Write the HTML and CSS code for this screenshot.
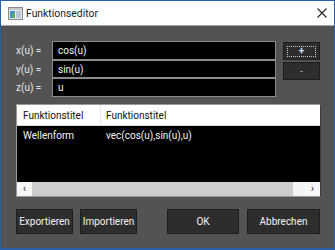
FILE: index.html
```html
<!DOCTYPE html>
<html>
<head>
<meta charset="utf-8">
<link rel="stylesheet" href="styles.css">
</head>
<body>
<div class="window">
  <div class="titlebar">
    <svg class="appicon" width="15" height="13" viewBox="0 0 15 13">
      <rect x="0.5" y="0.5" width="14" height="12" fill="#e8e8e8" stroke="#8a8a8a"/>
      <rect x="1" y="1" width="13" height="2" fill="#c8c8c8"/>
      <rect x="2" y="4" width="5" height="7" fill="#3f8fd8"/>
      <rect x="4" y="6" width="3" height="5" fill="#5aa85a"/>
      <rect x="8" y="4" width="5" height="7" fill="#b8c8d8"/>
    </svg>
    <span class="title">Funktionseditor</span>
    <svg class="close" width="10" height="10" viewBox="0 0 10 10">
      <path d="M0.5 0.5 L9.5 9.5 M9.5 0.5 L0.5 9.5" stroke="#222" stroke-width="1.1"/>
    </svg>
  </div>
  <div class="content">
    <div class="formulas">
      <div class="labels">
        <div class="lbl r1">x(u) =</div>
        <div class="lbl r2">y(u) =</div>
        <div class="lbl r3">z(u) =</div>
      </div>
      <div class="inputs">
        <div class="field r1">cos(u)</div>
        <div class="field r2">sin(u)</div>
        <div class="field r3">u</div>
      </div>
      <div class="pm">
        <div class="btn small focus"><span class="ring">+</span></div>
        <div class="btn small"><span class="minus">-</span></div>
      </div>
    </div>
    <div class="table">
      <div class="thead">
        <div class="c1">Funktionstitel</div>
        <div class="c2">Funktionstitel</div>
      </div>
      <div class="tbody">
        <div class="row">
          <div class="c1">Wellenform</div>
          <div class="c2">vec(cos(u),sin(u),u)</div>
        </div>
      </div>
      <div class="hscroll">
        <div class="arrow">&#8249;</div>
        <div class="thumb"></div>
        <div class="track"></div>
        <div class="arrow">&#8250;</div>
      </div>
    </div>
    <div class="actions">
      <div class="btn act exp">Exportieren</div>
      <div class="btn act imp">Importieren</div>
      <div class="spacer"></div>
      <div class="btn act ok">OK</div>
      <div class="btn act cancel">Abbrechen</div>
    </div>
  </div>
</div>
</body>
</html>
```
FILE: styles.css
```css
html, body {
  margin: 0;
  padding: 0;
}
body {
  width: 335px;
  height: 250px;
  overflow: hidden;
  font-family: Roboto, "Noto Sans", sans-serif;
  font-size: 10px;
}
.window {
  box-sizing: border-box;
  width: 335px;
  height: 250px;
  border: 1px solid #2b5fa8;
  border-bottom-width: 2px;
  background: #535353;
  display: flex;
  flex-direction: column;
}
.titlebar {
  height: 24px;
  background: #ffffff;
  border-bottom: 1px solid #a8a8a8;
  display: flex;
  align-items: center;
  padding-left: 7px;
  color: #1a1a1a;
}
.appicon {
  margin-right: 3px;
  margin-top: 1px;
}
.title {
  font-size: 10.4px;
  flex: 1;
}
.close {
  margin-right: 7px;
}
.content {
  flex: 1;
  padding: 15px 14px 0 15px;
  color: #f4f4f4;
  display: flex;
  flex-direction: column;
}
.formulas {
  display: flex;
}
.labels {
  width: 36px;
  display: flex;
  flex-direction: column;
}
.lbl {
  display: flex;
  align-items: center;
  height: 19px;
  color: #e8e8e8;
}
.r2 { height: 18px; }
.inputs {
  width: 224px;
  display: flex;
  flex-direction: column;
}
.field {
  box-sizing: border-box;
  height: 19px;
  background: #000;
  border: 1px solid #8c8c8c;
  padding-left: 5px;
  display: flex;
  align-items: center;
}
.field.r2 { height: 18px; }
.pm {
  margin-left: 7px;
  width: 37px;
  display: flex;
  flex-direction: column;
  gap: 2px;
  padding-top: 1px;
}
.btn {
  box-sizing: border-box;
  background: #2d2d2d;
  border: 1px solid #1c1c1c;
  color: #f4f4f4;
  display: flex;
  align-items: center;
  justify-content: center;
}
.btn.small {
  height: 18px;
}
.ring {
  box-sizing: border-box;
  width: 29px;
  height: 11px;
  border: 1px dotted #c8c8c8;
  display: flex;
  align-items: center;
  justify-content: center;
  color: #cfe4ff;
  font-size: 10px;
  font-weight: bold;
  line-height: 1;
}
.minus {
  font-size: 9px;
  line-height: 1;
  color: #d0d0d0;
}
.table {
  margin-top: 7px;
  width: 305px;
  box-sizing: border-box;
  border: 1px solid #9a9a9a;
  border-right-color: #3a3a3a;
  display: flex;
  flex-direction: column;
}
.thead {
  height: 20px;
  background: #ffffff;
  color: #111;
  display: flex;
  align-items: center;
  border-bottom: 1px solid #d8d8d8;
}
.c1 {
  box-sizing: border-box;
  width: 84px;
  padding-left: 6px;
}
.thead .c1 {
  border-right: 1px solid #e5e5e5;
  height: 20px;
  display: flex;
  align-items: center;
}
.c2 {
  padding-left: 5px;
}
.tbody {
  height: 56px;
  background: #000;
}
.row {
  display: flex;
  height: 17px;
  align-items: center;
  margin-top: 1px;
}
.hscroll {
  height: 14px;
  display: flex;
  background: #f0f0f0;
}
.arrow {
  width: 15px;
  color: #555;
  font-size: 11px;
  font-weight: bold;
  line-height: 13px;
  text-align: center;
  background: #f7f7f7;
}
.thumb {
  flex: 1;
  background: #cdcdcd;
}
.track {
  width: 12px;
  background: #f4f4f4;
}
.actions {
  margin-top: 12px;
  display: flex;
  gap: 7px;
  height: 25px;
}
.act {
  height: 25px;
  border-color: #1e1e1e;
}
.exp { width: 57px; }
.imp { width: 57px; }
.spacer { flex: 1; }
.ok { width: 72px; margin-right: 1px; }
.cancel { width: 73px; }
```
